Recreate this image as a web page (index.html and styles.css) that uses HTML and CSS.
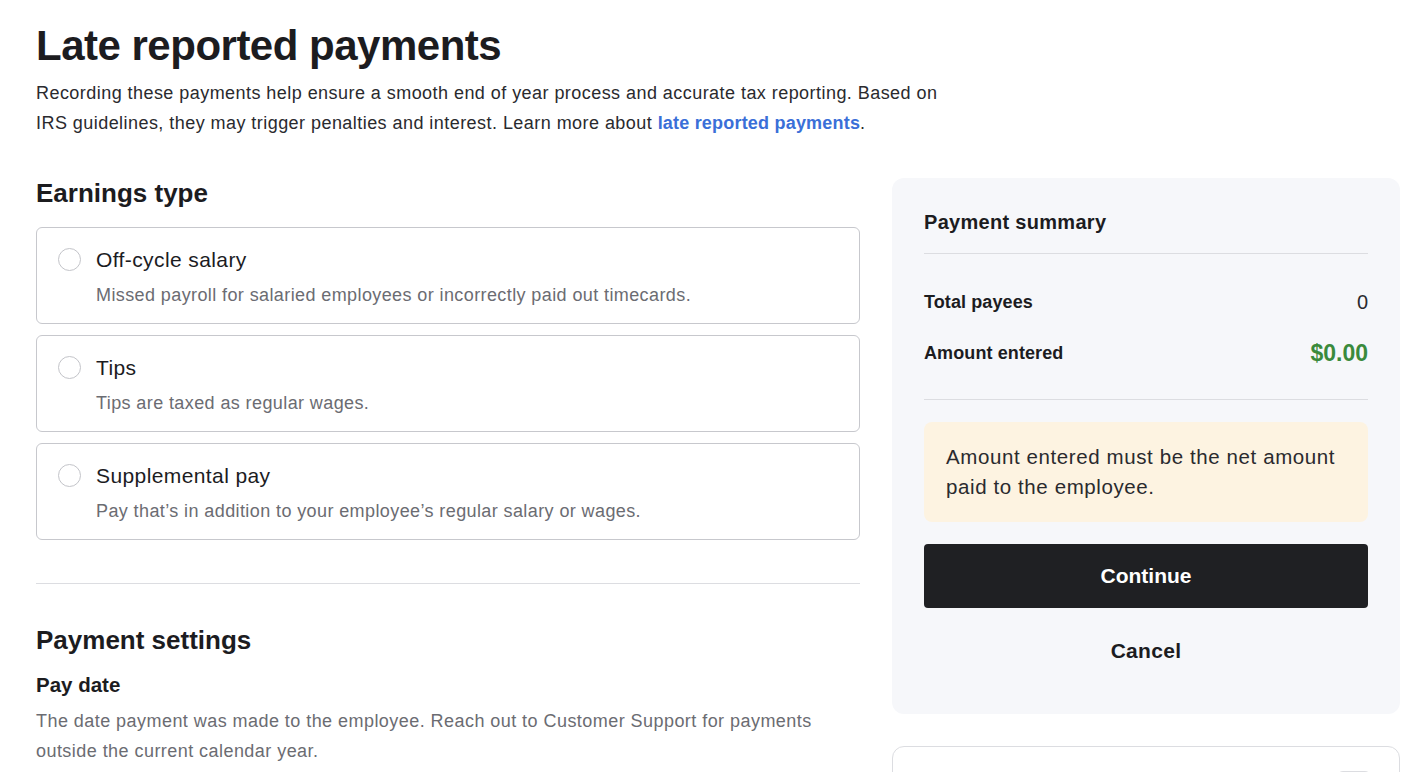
FILE: index.html
```html
<!DOCTYPE html>
<html lang="en">
<head>
<meta charset="UTF-8" />
<meta name="viewport" content="width=device-width, initial-scale=1" />
<title>Late reported payments</title>
<link rel="stylesheet" href="styles.css">
</head>
<body>

<div class="page">
  <header class="page-head">
    <h1>Late reported payments</h1>
    <p class="intro">Recording these payments help ensure a smooth end of year process and accurate tax reporting. Based on IRS guidelines, they may trigger penalties and interest. Learn more about <a href="#">late reported payments</a>.</p>
  </header>

  <div class="layout">
    <main class="main-col">
      <section class="earnings">
        <h2>Earnings type</h2>
        <div class="options">
          <label class="option">
            <span class="radio"></span>
            <span class="option-text">
              <span class="option-title">Off-cycle salary</span>
              <span class="option-desc">Missed payroll for salaried employees or incorrectly paid out timecards.</span>
            </span>
          </label>
          <label class="option">
            <span class="radio"></span>
            <span class="option-text">
              <span class="option-title">Tips</span>
              <span class="option-desc">Tips are taxed as regular wages.</span>
            </span>
          </label>
          <label class="option">
            <span class="radio"></span>
            <span class="option-text">
              <span class="option-title">Supplemental pay</span>
              <span class="option-desc">Pay that’s in addition to your employee’s regular salary or wages.</span>
            </span>
          </label>
        </div>
      </section>

      <hr class="divider" />

      <section class="settings">
        <h2>Payment settings</h2>
        <h3>Pay date</h3>
        <p class="hint">The date payment was made to the employee. Reach out to Customer Support for payments outside the current calendar year.</p>
      </section>
    </main>

    <aside class="side-col">
      <div class="summary">
        <h4>Payment summary</h4>
        <div class="summary-rows">
          <div class="row">
            <span class="row-label">Total payees</span>
            <span class="row-value">0</span>
          </div>
          <div class="row">
            <span class="row-label">Amount entered</span>
            <span class="row-value amount">$0.00</span>
          </div>
        </div>
        <div class="notice">Amount entered must be the net amount paid to the employee.</div>
        <button class="btn-primary">Continue</button>
        <button class="btn-link">Cancel</button>
      </div>
      <div class="side-card">
        <span class="side-chip"></span>
      </div>
    </aside>
  </div>
</div>

</body>
</html>
```

FILE: styles.css
```css
* {
  box-sizing: border-box;
}
body {
  margin: 0;
  font-family: "Liberation Sans", Arial, sans-serif;
  color: #1c1c1f;
  background: #fff;
  overflow: hidden;
}
.page {
  padding: 22px 28px 0 36px;
}

/* Header */
.page-head h1 {
  margin: 0;
  font-size: 42px;
  line-height: 48px;
  font-weight: 700;
  letter-spacing: -0.5px;
}
.intro {
  margin: 8px 0 0 0;
  max-width: 920px;
  font-size: 18px;
  line-height: 30px;
  letter-spacing: 0.45px;
  color: #2a2a2e;
}
.intro a {
  color: #3a6fd8;
  font-weight: 700;
  letter-spacing: 0.2px;
  text-decoration: none;
}

/* Two columns */
.layout {
  display: flex;
  gap: 32px;
  margin-top: 40px;
}
.main-col {
  width: 824px;
  flex-shrink: 0;
}
.side-col {
  flex: 1;
  display: flex;
  flex-direction: column;
  gap: 32px;
}

h2 {
  margin: 0;
  font-size: 26px;
  line-height: 34px;
  font-weight: 700;
}

/* Earnings options */
.earnings h2 {
  margin-top: -2px;
}
.options {
  display: flex;
  flex-direction: column;
  gap: 11px;
  margin-top: 17px;
}
.option {
  display: flex;
  align-items: flex-start;
  gap: 15px;
  height: 97px;
  padding: 19px 21px;
  border: 1px solid #c7c8cd;
  border-radius: 6px;
  cursor: pointer;
}
.radio {
  width: 23px;
  height: 23px;
  margin-top: 1px;
  border: 1px solid #c3c4c9;
  border-radius: 50%;
  background: #fff;
  flex-shrink: 0;
}
.option-text {
  display: flex;
  flex-direction: column;
}
.option-title {
  font-size: 21px;
  line-height: 26px;
  letter-spacing: 0.4px;
  color: #1c1c1f;
}
.option-desc {
  margin-top: 11px;
  font-size: 18px;
  line-height: 22px;
  letter-spacing: 0.4px;
  color: #6b6c72;
}

.divider {
  border: none;
  border-top: 1px solid #dcdde1;
  margin: 43px 0 0 0;
}

/* Payment settings */
.settings {
  padding-top: 39px;
}
.settings h3 {
  margin: 14px 0 0 0;
  font-size: 20.5px;
  line-height: 28px;
  font-weight: 700;
}
.hint {
  margin: 7px 0 0 0;
  font-size: 18px;
  line-height: 30px;
  letter-spacing: 0.45px;
  color: #6b6c72;
}

/* Summary panel */
.summary {
  background: #f6f7fa;
  border-radius: 12px;
  padding: 31px 32px 41px 32px;
  display: flex;
  flex-direction: column;
}
.summary h4 {
  margin: 0;
  font-size: 20px;
  line-height: 26px;
  letter-spacing: 0.3px;
  font-weight: 700;
  padding-bottom: 18px;
  border-bottom: 1px solid #dcdde1;
}
.summary-rows {
  display: flex;
  flex-direction: column;
  gap: 26px;
  padding: 36px 0 33px 0;
  border-bottom: 1px solid #dcdde1;
}
.row {
  display: flex;
  justify-content: space-between;
  align-items: center;
  height: 25px;
}
.row-label {
  font-size: 18px;
  font-weight: 700;
  letter-spacing: 0.1px;
}
.row-value {
  font-size: 20px;
  color: #2a2a2e;
}
.row-value.amount {
  font-size: 23px;
  font-weight: 700;
  color: #3a8a3c;
}
.notice {
  margin-top: 22px;
  background: #fdf3e1;
  border-radius: 8px;
  padding: 20px 22px;
  font-size: 20.5px;
  line-height: 30px;
  letter-spacing: 0.6px;
  color: #2a2a2e;
}
.btn-primary {
  margin-top: 22px;
  height: 64px;
  border: none;
  border-radius: 4px;
  background: #1f2023;
  color: #fff;
  font-family: inherit;
  font-size: 21px;
  font-weight: 700;
  cursor: pointer;
}
.btn-link {
  margin-top: 21px;
  border: none;
  background: transparent;
  color: #1c1c1f;
  font-family: inherit;
  font-size: 21px;
  font-weight: 700;
  letter-spacing: 0.3px;
  line-height: 42px;
  cursor: pointer;
}

.side-card {
  position: relative;
  height: 80px;
  border: 1px solid #dcdde1;
  border-radius: 12px;
  background: #fff;
}
.side-chip {
  position: absolute;
  top: 24px;
  right: 28px;
  width: 34px;
  height: 20px;
  border: 1px solid #dcdde1;
  border-radius: 6px;
}
```
